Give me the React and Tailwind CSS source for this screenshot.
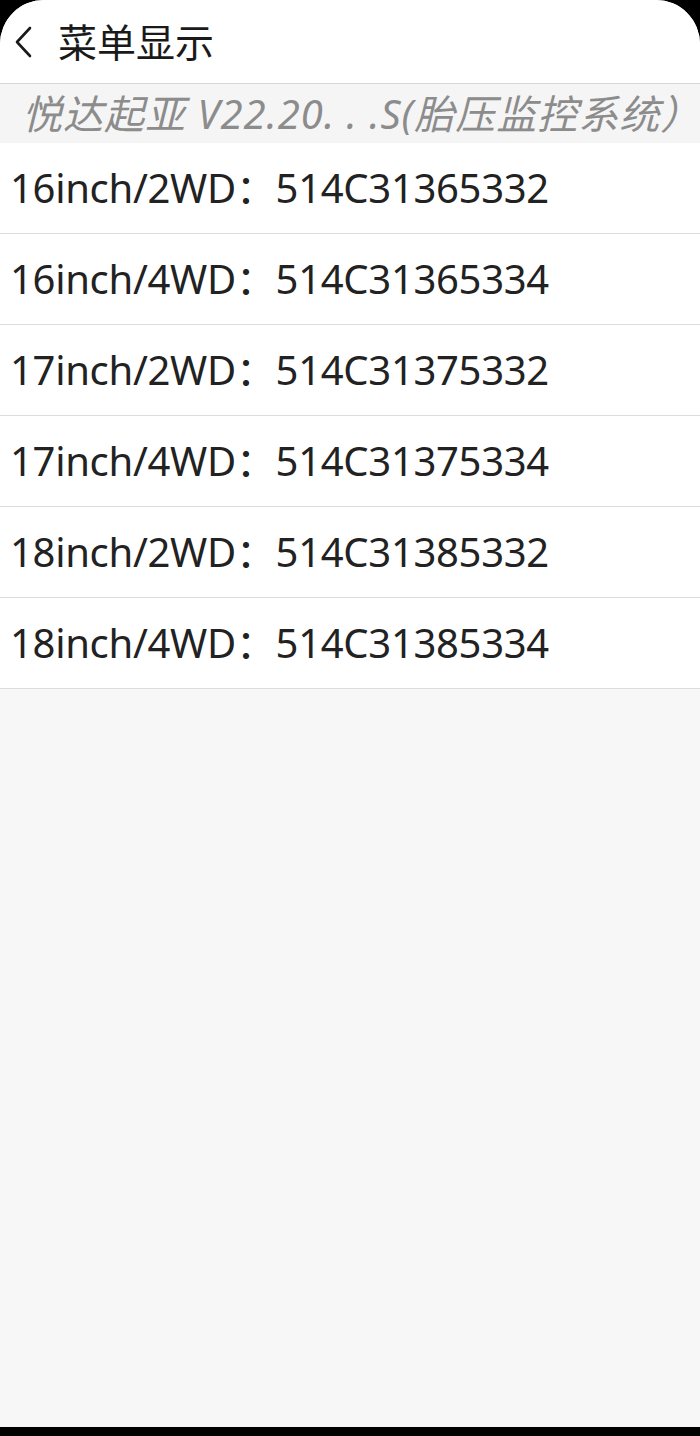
export default function App() {
  const rows = [
    "16inch/2WD：514C31365332",
    "16inch/4WD：514C31365334",
    "17inch/2WD：514C31375332",
    "17inch/4WD：514C31375334",
    "18inch/2WD：514C31385332",
    "18inch/4WD：514C31385334",
  ];

  return (
    <div
      className="bg-black h-[1436px] w-[700px] flex flex-col overflow-hidden"
      style={{ fontFamily: '"Noto Sans", "Noto Sans CJK SC", sans-serif' }}
    >
      <div className="flex-1 flex flex-col bg-[#f7f7f7] rounded-t-[44px] overflow-hidden">
        <div className="h-[84px] bg-white flex items-center border-b border-[#d6d6d6]">
          <svg width="40" height="40" viewBox="0 0 40 40" className="ml-[4px]" fill="none">
            <path d="M26 6 L13 20 L26 34" stroke="#1a1a1a" strokeWidth="2.6" strokeLinecap="round" strokeLinejoin="round" />
          </svg>
          <span className="ml-[14px] text-[39px] text-[#1a1a1a] leading-none">菜单显示</span>
        </div>
        <div className="h-[59px] bg-[#f5f5f5] flex items-center pl-[22px]">
          <span className="italic text-[40px] tracking-[1px] text-[#8c8c8c] leading-none whitespace-nowrap">
            悦达起亚 V22.20. . .S(胎压监控系统）
          </span>
        </div>
        <div className="bg-white">
          {rows.map((r) => (
            <div
              key={r}
              className="h-[91px] flex items-center pl-[10px] border-b border-[#dcdcdc] text-[40px] tracking-[-0.3px] text-[#222222] whitespace-nowrap"
            >
              {r}
            </div>
          ))}
        </div>
        <div className="flex-1" />
      </div>
      <div className="h-[9px] bg-black" />
    </div>
  );
}
